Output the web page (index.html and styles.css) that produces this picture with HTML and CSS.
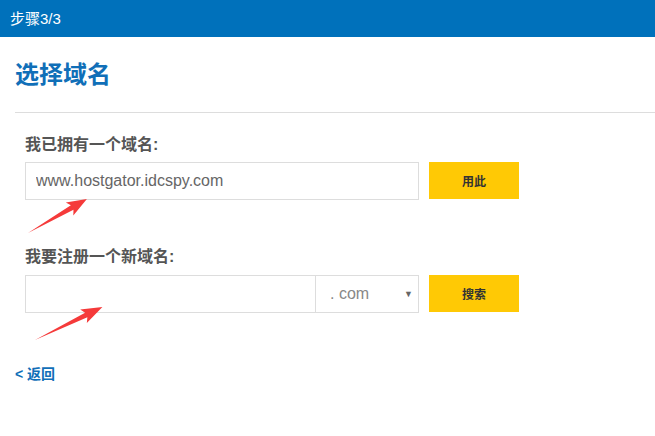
FILE: index.html
```html
<!DOCTYPE html>
<html lang="zh-CN">
<head>
  <meta charset="UTF-8">
  <title>选择域名</title>
  <link rel="stylesheet" href="styles.css">
</head>
<body>

<div class="topbar">步骤3/3</div>

<div class="page">
  <h1 class="title">选择域名</h1>
  <div class="rule"></div>

  <div class="form">
    <label class="lbl" for="own">我已拥有一个域名:</label>
    <div class="row">
      <input id="own" class="field field-wide" type="text" value="www.hostgator.idcspy.com">
      <button class="btn">用此</button>
    </div>

    <label class="lbl lbl-second" for="newdomain">我要注册一个新域名:</label>
    <div class="row">
      <div class="combo">
        <input id="newdomain" class="field field-name" type="text" value="">
        <div class="tld">
          <span>. com</span>
          <span class="caret">&#9660;</span>
        </div>
      </div>
      <button class="btn">搜索</button>
    </div>
  </div>

  <a href="#" class="back">&lt; 返回</a>
</div>

<!-- red annotation arrows -->
<svg class="marks" width="655" height="436" viewBox="0 0 655 436">
  <g transform="translate(28 233) rotate(-30)">
    <polygon points="0,0 51,-2.6 48,-7.5 68,0 48,7.5 51,2.6" fill="#f53a3a"/>
  </g>
  <g transform="translate(35 340) rotate(-26)">
    <polygon points="0,0 57,-2.6 54,-7.5 75,0 54,7.5 57,2.6" fill="#f53a3a"/>
  </g>
</svg>

</body>
</html>
```

FILE: styles.css
```css
body {
  margin: 0;
  font-family: "Liberation Sans", "Noto Sans CJK SC", sans-serif;
  background: #fff;
  color: #555;
}
.topbar {
  height: 37px;
  line-height: 37px;
  padding-left: 10px;
  background: #0071bb;
  color: #fff;
  font-size: 15px;
}
.page {
  padding-left: 15px;
}
.title {
  margin: 0;
  padding-top: 22px;
  font-size: 24px;
  line-height: 32px;
  font-weight: bold;
  color: #106fb8;
}
.rule {
  margin-top: 21px;
  height: 1px;
  background: #ddd;
}
.form {
  padding-left: 10px;
  padding-top: 22px;
}
.lbl {
  display: block;
  font-size: 16px;
  line-height: 20px;
  font-weight: bold;
  color: #555;
  margin-bottom: 7px;
}
.lbl-second {
  margin-top: 47px;
  margin-bottom: 8px;
}
.row {
  display: flex;
  gap: 10px;
}
.field {
  box-sizing: border-box;
  height: 38px;
  border: 1px solid #ddd;
  padding: 0 10px;
  font-family: "Liberation Sans", sans-serif;
  font-size: 16px;
  color: #666;
  outline: none;
  background: #fff;
}
.field-wide {
  width: 394px;
}
.combo {
  display: flex;
  width: 394px;
}
.field-name {
  width: 291px;
}
.tld {
  box-sizing: border-box;
  width: 103px;
  height: 38px;
  border: 1px solid #ddd;
  border-left: none;
  display: flex;
  align-items: center;
  justify-content: space-between;
  padding: 0 5px 0 14px;
  font-size: 16px;
  color: #888;
}
.caret {
  font-size: 9px;
  color: #666;
}
.btn {
  width: 90px;
  height: 37px;
  border: none;
  background: #ffc905;
  color: #333;
  font-family: "Noto Sans CJK SC", sans-serif;
  font-size: 12px;
  font-weight: bold;
  cursor: pointer;
}
.back {
  display: inline-block;
  margin-top: 53px;
  font-size: 14px;
  line-height: 16px;
  font-weight: bold;
  color: #106fb8;
  text-decoration: none;
}
.marks {
  position: absolute;
  top: 0;
  left: 0;
  pointer-events: none;
}
```
